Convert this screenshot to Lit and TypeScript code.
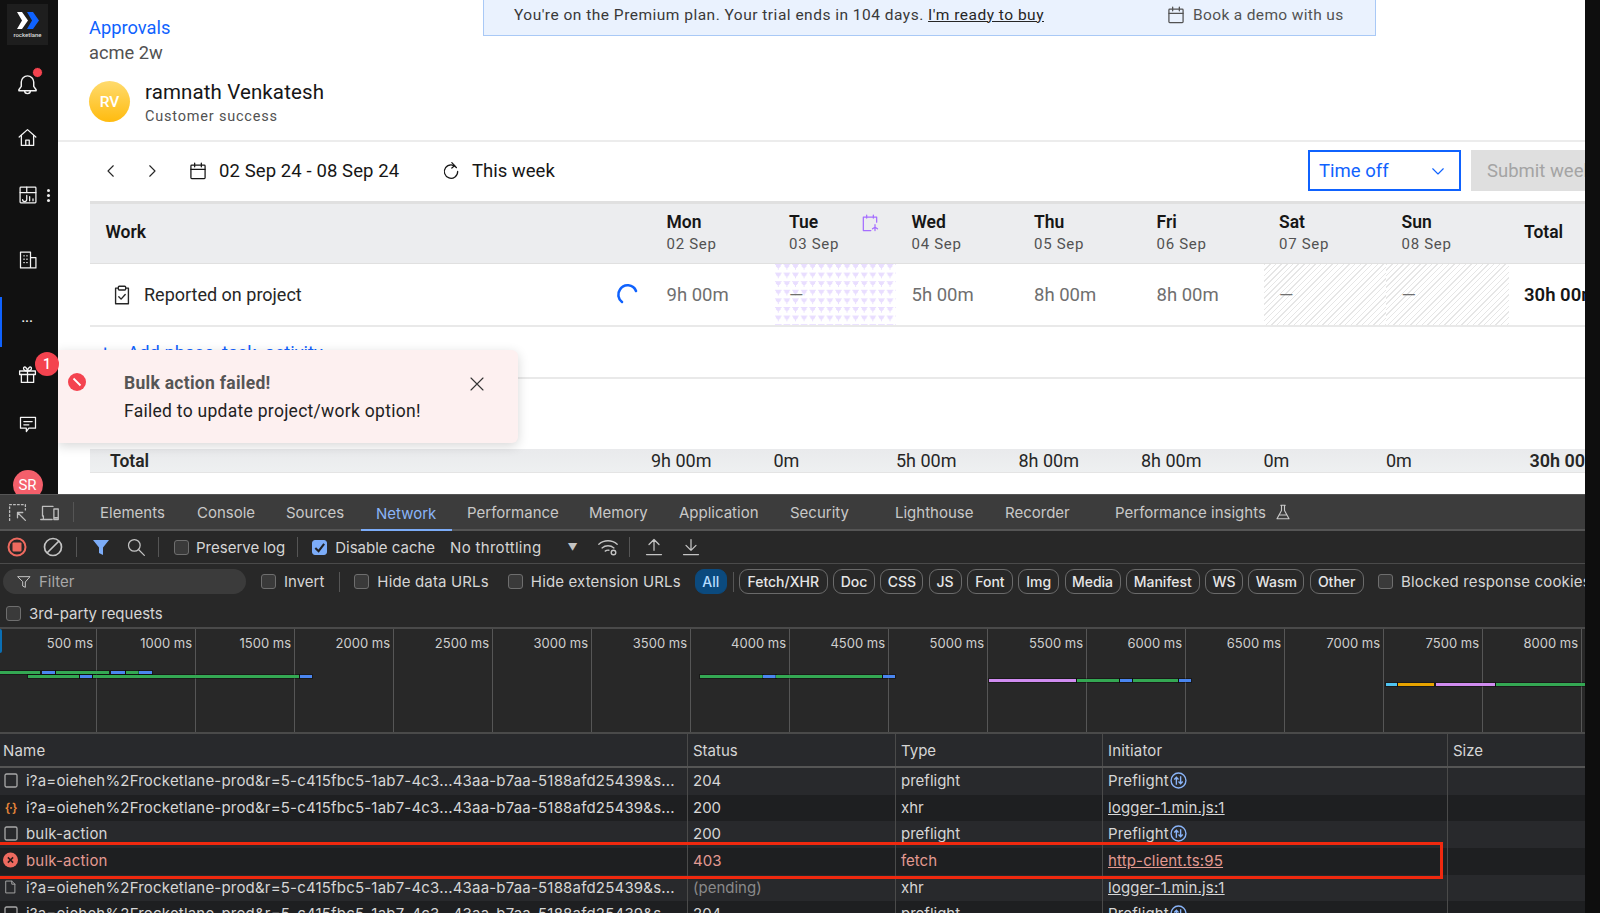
import { LitElement, html, css, svg } from "lit";
import { customElement } from "lit/decorators.js";

// ========== Iconos ============= //
const icon = (size: number, body: unknown, box = 24) => html`
  <svg width=${size} height=${size} viewBox="0 0 ${box} ${box}" fill="none" stroke="currentColor" stroke-width="1.5" stroke-linecap="round" stroke-linejoin="round">${body}</svg>
`;

const calendarPath = svg`<rect x="3.5" y="5" width="17" height="16" rx="1"/><path d="M3.5 10h17M8 2.5V7M16 2.5V7"/>`;
const bellPath = svg`<path d="M12 3a6.5 6.5 0 0 0-6.5 6.5V14L3 17.5v1h18v-1L18.5 14V9.5A6.5 6.5 0 0 0 12 3z"/><path d="M9 18.5a3 3 0 0 0 6 0"/>`;
const homePath = svg`<path d="M2.5 11.5 12 3l9.5 8.5"/><path d="M5 9.5V21h14V9.5"/><path d="M10 21v-6h4v6"/>`;
const reportPath = svg`<rect x="2.5" y="2.5" width="19" height="19" rx="1"/><path d="M2.5 9h19M10.5 2.5V9"/><path d="M5.5 17.5a2.5 2.5 0 0 0 5 0V12.5"/><path d="M14 14v5M18 16.5v2.5"/>`;
const buildingPath = svg`<path d="M3 21.5V2.5h12v19M15 9h6.5v12.5H3"/><path d="M7 7h.5M10.5 7h.5M7 11h.5M10.5 11h.5M7 15h.5M10.5 15h.5"/>`;
const giftPath = svg`<rect x="3" y="8" width="18" height="4"/><path d="M5 12v9h14v-9M12 8v13"/><path d="M12 8C9 8 7 6.5 7.5 4.5S11 3 12 8c1-5 4-5.5 4.5-3.5S15 8 12 8z"/>`;
const commentPath = svg`<path d="M3 4h18v13h-8l-3 4v-4H3z"/><path d="M7 9h10M7 13h6"/>`;
const funnelPath = svg`<path d="M3 4h18l-7 8v8l-4-2v-6z"/>`;

// ========== Vista de horas ============= //
@customElement("timesheet-view")
export class TimesheetView extends LitElement {
  static styles = css`
    :host {
      display: block;
      position: relative;
      height: 494px;
      overflow: hidden;
      background: #fff;
      font-family: Roboto, "Liberation Sans", sans-serif;
      color: #161616;
    }

    .banner {
      position: absolute;
      left: 425px;
      top: -1px;
      width: 893px;
      height: 37px;
      box-sizing: border-box;
      padding-bottom: 6px;
      background: #eaf2fe;
      border: 1px solid #a9c9f6;
      display: flex;
      align-items: center;
      font-size: 15.5px;
      letter-spacing: 0.49px;
      color: #393939;
      z-index: 1;
    }
    .banner .msg { margin-left: 30px; width: 652px; white-space: nowrap; }
    .banner u { color: #262626; }
    .banner .demo { display: flex; align-items: center; gap: 7px; color: #525252; letter-spacing: 0.35px; }

    .head { height: 140px; padding-left: 31px; box-sizing: border-box; }
    .approvals { padding-top: 17px; height: 22px; line-height: 22px; font-size: 18.3px; color: #0f62fe; }
    .project { margin-top: 3px; height: 22px; line-height: 22px; font-size: 18.3px; color: #525252; }
    .person { display: flex; gap: 15px; margin-top: 17px; }
    .avatar {
      width: 41px;
      height: 41px;
      border-radius: 50%;
      background: linear-gradient(#ffdb6e, #ffbb0f);
      color: #fff;
      font-size: 15.5px;
      font-weight: 500;
      display: flex;
      align-items: center;
      justify-content: center;
    }
    .name { font-size: 20.5px; line-height: 24px; margin-top: -1px; letter-spacing: 0.12px; }
    .role { font-size: 14.5px; line-height: 18px; margin-top: 4px; color: #525252; letter-spacing: 0.8px; }

    .tools {
      height: 61px;
      border-top: 2px solid #ececec;
      box-sizing: border-box;
      display: flex;
      align-items: center;
      font-size: 18.5px;
      padding-bottom: 2px;
      white-space: nowrap;
    }
    .nav { display: flex; color: #262626; margin-left: 44px; gap: 23px; }
    .range { display: flex; align-items: center; gap: 11px; margin-left: 27px; width: 253px; letter-spacing: 0.1px; }
    .today { display: flex; align-items: center; gap: 11px; }
    .spacer { flex: 1; }
    .time-off {
      width: 153px;
      height: 41px;
      box-sizing: border-box;
      border: 2px solid #0f62fe;
      color: #0f62fe;
      display: flex;
      align-items: center;
      justify-content: space-between;
      padding: 0 12px 0 9px;
    }
    .submit {
      width: 114px;
      height: 41px;
      margin-left: 10px;
      background: #dfdfdf;
      color: #a4a4a4;
      display: flex;
      align-items: center;
      padding-left: 16px;
      box-sizing: border-box;
      overflow: hidden;
    }

    .sheet { margin-left: 32px; }
    .row {
      display: grid;
      grid-template-columns: 561px repeat(7, 122.5px) 150px;
      align-items: stretch;
    }
    .row > div { display: flex; align-items: center; padding-left: 15.5px; white-space: nowrap; min-width: 0; }

    .header { height: 63px; background: #ecedef; border-top: 3px solid #e0e0e0; border-bottom: 1px solid #e0e0e0; box-sizing: border-box; }
    .header > div { padding-bottom: 3px; }
    .header .cap { font-weight: 600; font-size: 17.5px; }
    .header .day { flex-direction: column; align-items: flex-start; justify-content: center; position: relative; }
    .header .date { font-size: 15px; letter-spacing: 0.7px; color: #525252; margin-top: 3px; }
    .leave { position: absolute; right: 16px; top: 9px; color: #a56eff; }

    .task { height: 63px; border-bottom: 2px solid #e9e9e9; box-sizing: border-box; font-size: 18.5px; color: #6f6f6f; }
    .task > div { padding-top: 1px; }
    .task .work { color: #262626; gap: 11px; padding: 0 11px 0 21px; font-size: 18px; }
    .spin { margin-left: auto; color: #0f62fe; display: flex; }
    .task .sum { color: #161616; font-weight: 600; }
    .holiday {
      background-image: conic-gradient(from -36deg at 50% 62%, #e9deff 72deg, transparent 0);
      background-size: 8.6px 8.6px;
    }
    .weekend {
      background-image: repeating-linear-gradient(135deg, #e6e6e6 0 1px, transparent 1px 4px);
    }

    .add { height: 52px; border-bottom: 2px solid #e9e9e9; box-sizing: border-box; display: flex; align-items: center; color: #0f62fe; font-size: 18.3px; gap: 17px; padding-left: 10px; }

    .total {
      margin-top: 70px;
      height: 24px;
      background: linear-gradient(#e9eaec, #eef0f1);
      border-bottom: 1px solid #e4e4e4;
      box-sizing: border-box;
      font-size: 18px;
      color: #262626;
    }
    .total > div { padding-left: 0; }
    .total .cap { padding-left: 20px; font-weight: 600; font-size: 17.5px; }
    .total .sum { font-weight: 600; padding-left: 21px; }

    .toast {
      position: absolute;
      left: 0;
      top: 350px;
      width: 460px;
      height: 93px;
      box-sizing: border-box;
      padding: 22px 32px 0 10px;
      display: flex;
      align-items: flex-start;
      background: #fdf0f0;
      border-radius: 0 6px 6px 0;
      box-shadow: 0 3px 12px rgba(0, 0, 0, 0.16);
      z-index: 2;
      font-size: 17.5px;
      letter-spacing: 0.28px;
      white-space: nowrap;
    }
    .toast .bad { margin: 1px 38px 0 0; flex: none; }
    .toast .copy { flex: 1; }
    .toast .title { line-height: 22px; font-weight: 700; color: #555; }
    .toast .text { margin-top: 6px; line-height: 22px; color: #222; }
    .toast .close { margin-top: 3px; color: #333; display: flex; }
  `;

  private days = [
    ["Mon", "02 Sep"], ["Tue", "03 Sep"], ["Wed", "04 Sep"], ["Thu", "05 Sep"],
    ["Fri", "06 Sep"], ["Sat", "07 Sep"], ["Sun", "08 Sep"],
  ];

  render() {
    return html`
      <div class="banner">
        <span class="msg">You're on the Premium plan. Your trial ends in 104 days. <u>I'm ready to buy</u></span>
        <span class="demo">${icon(20, calendarPath)} Book a demo with us</span>
      </div>

      <div class="head">
        <div class="approvals">Approvals</div>
        <div class="project">acme 2w</div>
        <div class="person">
          <div class="avatar">RV</div>
          <div>
            <div class="name">ramnath Venkatesh</div>
            <div class="role">Customer success</div>
          </div>
        </div>
      </div>

      <div class="tools">
        <div class="nav">
          ${icon(18, svg`<path d="M15 5l-7 7 7 7"/>`)}
          ${icon(18, svg`<path d="M9 5l7 7-7 7"/>`)}
        </div>
        <div class="range">${icon(20, calendarPath)} 02 Sep 24 - 08 Sep 24</div>
        <div class="today">
          ${icon(20, svg`<path d="M18.5 8A8 8 0 1 0 20 12.5"/><path d="M13 2l3.5 3.5L13 8.5"/>`)} This week
        </div>
        <div class="spacer"></div>
        <div class="time-off">Time off ${icon(18, svg`<path d="M5 9l7 7 7-7"/>`)}</div>
        <div class="submit">Submit week</div>
      </div>

      <div class="sheet">
        <div class="row header">
          <div class="cap">Work</div>
          ${this.days.map(([d, date], i) => html`
            <div class="day">
              <span class="cap">${d}</span>
              <span class="date">${date}</span>
              ${i === 1 ? html`<span class="leave">${icon(20, svg`<path d="M20 11V5H4v16h9"/><path d="M8 2.5V6M16 2.5V6"/><path d="M18 14v7M15 19l3-2 3 2"/>`)}</span>` : ""}
            </div>
          `)}
          <div class="cap">Total</div>
        </div>

        <div class="row task">
          <div class="work">
            ${icon(22, svg`<path d="M8 4.5H5v17h14v-17h-3"/><rect x="8" y="2.5" width="8" height="4" rx="1"/><path d="M8.5 14l2.5 2.5 4.5-5"/>`)}
            Reported on project
            <span class="spin">
              <svg width="24" height="24" viewBox="0 0 24 24" fill="none" stroke="currentColor" stroke-width="2.6" stroke-linecap="round"><path d="M20 8A9 9 0 0 0 4 6.5 9 9 0 0 0 6 19"/></svg>
            </span>
          </div>
          <div>9h 00m</div>
          <div class="holiday">—</div>
          <div>5h 00m</div>
          <div>8h 00m</div>
          <div>8h 00m</div>
          <div class="weekend">—</div>
          <div class="weekend">—</div>
          <div class="sum">30h 00m</div>
        </div>

        <div class="add"><span>+</span><span>Add phase, task, activity</span></div>

        <div class="row total">
          <div class="cap">Total</div>
          <div>9h 00m</div>
          <div>0m</div>
          <div>5h 00m</div>
          <div>8h 00m</div>
          <div>8h 00m</div>
          <div>0m</div>
          <div>0m</div>
          <div class="sum">30h 00m</div>
        </div>
      </div>

      <div class="toast">
        <svg class="bad" width="18" height="18" viewBox="0 0 18 18"><circle cx="9" cy="9" r="9" fill="#f4434f"/><path d="M5.5 5.5l7 7" stroke="#fff" stroke-width="1.8"/></svg>
        <div class="copy">
          <div class="title">Bulk action failed!</div>
          <div class="text">Failed to update project/work option!</div>
        </div>
        <span class="close">${icon(18, svg`<path d="M4 4l16 16M20 4L4 20"/>`)}</span>
      </div>
    `;
  }
}

// ========== Panel de DevTools ============= //
type Req = { icon: string; name: string; status: string; type: string; init: string; link?: boolean; pre?: boolean; err?: boolean; pending?: boolean };

const longName = "i?a=oieheh%2Frocketlane-prod&r=5-c415fbc5-1ab7-4c3...43aa-b7aa-5188afd25439&s...";

@customElement("devtools-panel")
export class DevtoolsPanel extends LitElement {
  static styles = css`
    :host {
      display: block;
      height: 419px;
      overflow: hidden;
      background: #282828;
      color: #d6d6d6;
      font-family: Inter, Roboto, sans-serif;
      font-size: 15px;
      white-space: nowrap;
    }

    .tabs {
      height: 34px;
      background: #3c3c3c;
      border-top: 1px solid #555;
      border-bottom: 2px solid #555;
      display: grid;
      grid-template-columns: 85px 97px 89px 90px 91px 122px 90px 111px 105px 110px 110px 1fr;
      align-items: stretch;
      color: #c8c8c8;
    }
    .tabs .lead { display: flex; align-items: center; gap: 11px; padding-left: 7px; color: #bdbdbd; }
    .tabs .lead .sep { margin-left: 2px; }
    .tabs .tab { display: flex; align-items: center; gap: 8px; padding-left: 15px; }
    .tabs .on { color: #8ab4f8; box-shadow: inset 0 -2px 0 #7cacf8; margin-bottom: -2px; }

    .bar { display: flex; align-items: center; box-sizing: border-box; border-bottom: 1px solid #4a4a4a; }
    .bar2 { height: 33px; }
    .bar3 { height: 34px; border-bottom: 0; padding-top: 1px; overflow: hidden; }
    .bar4 { height: 31px; border-bottom: 2px solid #4a4a4a; padding: 1px 0 0 6px; }

    .box { width: 15px; height: 15px; border: 1px solid #6e6e6e; border-radius: 3px; background: #3a3a3a; box-sizing: border-box; flex: none; margin-right: 8px; }
    .box.yes { background: #7cacf8; border-color: #7cacf8; color: #202124; display: flex; align-items: center; justify-content: center; }
    .sep { width: 1px; height: 20px; background: #555; flex: none; }
    .ico { display: flex; flex: none; color: #c4c4c4; }

    /* Barra de grabacion */
    .rec { margin-left: 7px; color: #ee6a5f; }
    .clear { margin-left: 16px; }
    .sep-a { margin-left: 13px; }
    .filter-on { margin-left: 15px; color: #7cacf8; }
    .find { margin-left: 16px; }
    .sep-b { margin-left: 12px; }
    .box.preserve { margin: 0 7px 0 15px; }
    .sep-c { margin-left: 12px; }
    .cache { margin-left: 14px; }
    .throttle { margin-left: 15px; letter-spacing: 0.3px; }
    .arrow { margin-left: 26px; font-size: 10px; color: #c4c4c4; }
    .wifi { margin-left: 19px; }
    .sep-d { margin-left: 10px; }
    .upload { margin-left: 14px; }
    .download { margin-left: 17px; }

    /* Barra de filtros */
    .pill {
      width: 243px;
      height: 25px;
      margin-left: 3px;
      background: #3b3b3b;
      border-radius: 13px;
      display: flex;
      align-items: center;
      gap: 7px;
      padding-left: 13px;
      box-sizing: border-box;
      color: #a8a8a8;
      flex: none;
    }
    .invert { margin-left: 15px; }
    .sep-e { margin-left: 15px; }
    .hide-data { margin-left: 14px; }
    .hide-ext { margin-left: 19px; }
    .wide { letter-spacing: 0.15px; flex: none; }
    .sep-f { margin: 0 5px 0 6px; }
    .blocked { margin-left: 9px; }
    .chip {
      height: 25px;
      box-sizing: border-box;
      border: 1px solid #6a6a6a;
      border-radius: 9px;
      display: flex;
      align-items: center;
      justify-content: center;
      font-size: 14px;
      font-weight: 500;
      color: #e6e6e6;
      flex: none;
      margin-right: 5.3px;
    }
    .chip.all { width: 32px; margin: 0 0 0 14px; background: #0b4a7e; border-color: #0b4a7e; color: #b6dcff; }

    .overview { position: relative; height: 105px; border-bottom: 2px solid #4a4a4a; box-sizing: border-box; display: flex; font-size: 13px; color: #cfcfcf; }
    .tick { width: 99px; flex: none; border-right: 1px solid #565656; box-sizing: border-box; text-align: right; padding: 6px 3px 0 0; }
    .tick:first-child { width: 97px; }
    .seg { position: absolute; height: 3px; box-shadow: 0 0 0 1px rgba(0, 0, 0, 0.35); }
    .handle { position: absolute; left: 0; top: 0; width: 2px; height: 24px; background: #0a6fb5; border-radius: 0 2px 2px 0; }

    .net { position: relative; }
    .tr { display: grid; grid-template-columns: 687px 208px 207px 345px 1fr; height: 26.7px; align-items: stretch; background: #28292c; }
    .tr.alt { background: #1e1f21; }
    .tr > div { display: flex; align-items: center; padding: 0 0 2px 5px; border-left: 1px solid #4a4a4a; overflow: hidden; box-sizing: border-box; }
    .tr > div:first-child { border-left: 0; padding-left: 3px; gap: 8px; letter-spacing: 0.19px; }
    .tr > div:nth-child(4) { letter-spacing: 0.15px; }
    .tr.th { height: 34px; border-bottom: 2px solid #555; box-sizing: border-box; }
    .tr.th > div { padding-bottom: 0; }
    .tr.err { color: #e39a92; }
    .tr .pending { color: #8a8a8a; }
    .link { text-decoration: underline; }
    .pre { color: #8ab4f8; margin-left: 1px; display: flex; }
    .kind { width: 15px; display: flex; justify-content: center; flex: none; color: #a8a8a8; }
    .kind.json { color: #e8873a; font-size: 12px; font-weight: 600; letter-spacing: -1px; }

    .mark {
      position: absolute;
      left: -3px;
      top: 108px;
      width: 1446px;
      height: 37px;
      border: 3px solid #f0290f;
      box-sizing: border-box;
    }
  `;

  private ticks = [500, 1000, 1500, 2000, 2500, 3000, 3500, 4000, 4500, 5000, 5500, 6000, 6500, 7000, 7500, 8000];

  // x inicial, x final, fila y color de cada tramo del resumen
  private segs: [number, number, number, string][] = [
    [0, 40, 0, "g"], [42, 55, 0, "b"], [56, 109, 0, "g"], [111, 125, 0, "b"], [126, 139, 0, "g"], [139, 152, 0, "b"],
    [28, 79, 1, "g"], [80, 92, 1, "b"], [93, 299, 1, "g"], [300, 312, 1, "b"],
    [700, 763, 1, "g"], [763, 776, 1, "b"], [776, 882, 1, "g"], [883, 895, 1, "b"],
    [989, 1076, 2, "p"], [1077, 1119, 2, "g"], [1120, 1132, 2, "b"], [1133, 1178, 2, "g"], [1179, 1191, 2, "b"],
    [1386, 1397, 3, "c"], [1398, 1434, 3, "o"], [1436, 1495, 3, "p"], [1496, 1585, 3, "g"],
  ];

  private colors: Record<string, string> = { g: "#34a853", b: "#4a86f0", p: "#d08cf0", c: "#4fc3f0", o: "#e8a400" };

  private chips: [string, number][] = [
    ["Fetch/XHR", 89], ["Doc", 42], ["CSS", 43], ["JS", 33], ["Font", 46], ["Img", 41],
    ["Media", 56], ["Manifest", 74], ["WS", 38], ["Wasm", 56], ["Other", 54],
  ];

  private rows: Req[] = [
    { icon: "box", name: longName, status: "204", type: "preflight", init: "Preflight", pre: true },
    { icon: "json", name: longName, status: "200", type: "xhr", init: "logger-1.min.js:1", link: true },
    { icon: "box", name: "bulk-action", status: "200", type: "preflight", init: "Preflight", pre: true },
    { icon: "err", name: "bulk-action", status: "403", type: "fetch", init: "http-client.ts:95", link: true, err: true },
    { icon: "doc", name: longName, status: "(pending)", type: "xhr", init: "logger-1.min.js:1", link: true, pending: true },
    { icon: "box", name: longName, status: "204", type: "preflight", init: "Preflight", pre: true },
  ];

  private kind(k: string) {
    if (k === "json") return html`<span class="kind json">{·}</span>`;
    if (k === "err") return html`<span class="kind"><svg width="16" height="16" viewBox="0 0 16 16"><circle cx="8" cy="8" r="8" fill="#ee6a5f"/><path d="M5.2 5.2l5.6 5.6M10.8 5.2l-5.6 5.6" stroke="#2a1a1a" stroke-width="1.6"/></svg></span>`;
    if (k === "doc") return html`<span class="kind">${icon(16, svg`<path d="M5 2.5h9l5 5v14H5zM14 2.5v5h5"/>`)}</span>`;
    return html`<span class="kind"><svg width="14" height="15" viewBox="0 0 14 15" fill="none" stroke="currentColor" stroke-width="1.3"><rect x="1" y="1" width="12" height="13" rx="1.5"/></svg></span>`;
  }

  render() {
    return html`
      <div class="tabs">
        <div class="lead">
          ${icon(21, svg`<path stroke-dasharray="2 2.5" d="M3 21V3h18v6"/><path d="M12 12l9 9M12 18v-6h6"/>`)}
          ${icon(21, svg`<path d="M4 16V5h12M2 20h13M5 20v-4M17 8h5v12h-5zM18 18h3"/>`)}
          <span class="sep"></span>
        </div>
        ${["Elements", "Console", "Sources", "Network", "Performance", "Memory", "Application", "Security", "Lighthouse", "Recorder"].map(t => html`
          <div class="tab ${t === "Network" ? "on" : ""}">${t}</div>
        `)}
        <div class="tab">Performance insights ${icon(18, svg`<path d="M9 3h6M10 3v7l-6 11h16l-6-11V3M7 16h10"/>`)}</div>
      </div>

      <div class="bar bar2">
        <span class="ico rec">
          <svg width="20" height="20" viewBox="0 0 20 20" fill="none" stroke="currentColor" stroke-width="2"><circle cx="10" cy="10" r="8.5"/><rect x="5.5" y="5.5" width="9" height="9" rx="1" fill="currentColor" stroke="none"/></svg>
        </span>
        <span class="ico clear"><svg width="20" height="20" viewBox="0 0 20 20" fill="none" stroke="currentColor" stroke-width="1.7"><circle cx="10" cy="10" r="8.5"/><path d="M4 16L16 4"/></svg></span>
        <span class="sep sep-a"></span>
        <span class="ico filter-on"><svg width="18" height="18" viewBox="0 0 18 18" fill="currentColor"><path d="M1 2h16l-6 7.5V17l-4-2V9.5z"/></svg></span>
        <span class="ico find">${icon(20, svg`<circle cx="10" cy="10" r="7"/><path d="M15 15l7 7"/>`)}</span>
        <span class="sep sep-b"></span>
        <span class="box preserve"></span>Preserve log
        <span class="sep sep-c"></span>
        <span class="box yes cache"><svg width="13" height="13" viewBox="0 0 14 14" fill="none" stroke="currentColor" stroke-width="2.2"><path d="M2.5 7.5L6 11l6-8"/></svg></span>Disable cache
        <span class="throttle">No throttling</span>
        <span class="arrow">▼</span>
        <span class="ico wifi">${icon(22, svg`<path d="M2 9a15 15 0 0 1 20 0M5.5 13a10 10 0 0 1 13 0M9 16.5a5 5 0 0 1 4-1"/><circle cx="18" cy="18" r="2.5"/>`)}</span>
        <span class="sep sep-d"></span>
        <span class="ico upload">${icon(20, svg`<path d="M12 16V3M6 9l6-6 6 6M3 21h18"/>`)}</span>
        <span class="ico download">${icon(20, svg`<path d="M12 3v13M6 10l6 6 6-6M3 21h18"/>`)}</span>
      </div>

      <div class="bar bar3">
        <div class="pill"><span class="ico">${icon(16, funnelPath)}</span>Filter</div>
        <span class="box invert"></span>Invert
        <span class="sep sep-e"></span>
        <span class="box hide-data"></span><span class="wide">Hide data URLs</span>
        <span class="box hide-ext"></span><span class="wide">Hide extension URLs</span>
        <span class="chip all">All</span>
        <span class="sep sep-f"></span>
        ${this.chips.map(([c, w]) => html`<span class="chip" style="width:${w}px">${c}</span>`)}
        <span class="box blocked"></span><span class="wide">Blocked response cookies</span>
      </div>

      <div class="bar bar4"><span class="box"></span>3rd-party requests</div>

      <div class="overview">
        ${this.ticks.map(t => html`<div class="tick">${t} ms</div>`)}
        <span class="handle"></span>
        ${this.segs.map(([a, b, r, c]) => html`
          <span class="seg" style="left:${a}px;width:${b - a}px;top:${41.5 + r * 4}px;background:${this.colors[c]}"></span>
        `)}
      </div>

      <div class="net">
        <div class="tr th">
          <div>Name</div><div>Status</div><div>Type</div><div>Initiator</div><div>Size</div>
        </div>
        ${this.rows.map((r, i) => html`
          <div class="tr ${i % 2 ? "alt" : ""} ${r.err ? "err" : ""}">
            <div>${this.kind(r.icon)}<span>${r.name}</span></div>
            <div class=${r.pending ? "pending" : ""}>${r.status}</div>
            <div>${r.type}</div>
            <div>
              <span class=${r.link ? "link" : ""}>${r.init}</span>
              ${r.pre ? html`<span class="pre"><svg width="17" height="17" viewBox="0 0 16 16" fill="none" stroke="currentColor" stroke-width="1.3"><circle cx="8" cy="8" r="7"/><path d="M6 12V5M4 7l2-2 2 2M10 4v7M8 9l2 2 2-2"/></svg></span>` : ""}
            </div>
            <div></div>
          </div>
        `)}
        <div class="mark"></div>
      </div>
    `;
  }
}

// ========== Pagina ============= //
@customElement("app-root")
export class AppRoot extends LitElement {
  static styles = css`
    :host {
      display: flex;
      width: 1600px;
      height: 913px;
      overflow: hidden;
      background: #0e0e0e;
    }

    .window { width: 1585px; flex: none; }
    .top { display: flex; height: 494px; }
    .top timesheet-view { flex: 1; min-width: 0; }

    .side {
      width: 58px;
      flex: none;
      height: 494px;
      box-sizing: border-box;
      padding-right: 3px;
      background: #111;
      color: #f4f4f4;
      display: grid;
      grid-template-columns: 55px;
      grid-template-rows: 60px 48px 58px 58px 72px 50px 56px 44px 48px;
      justify-items: center;
      align-items: center;
      position: relative;
      z-index: 5;
      font-family: Roboto, sans-serif;
    }
    .logo {
      align-self: start;
      margin-top: 4px;
      width: 41px;
      height: 41px;
      background: #1e1e1e;
      display: flex;
      flex-direction: column;
      align-items: center;
      padding-top: 8px;
      box-sizing: border-box;
    }
    .logo span { font-size: 6px; line-height: 7px; font-weight: 500; color: #ddd; margin-top: 2px; }
    .item { position: relative; display: flex; }
    .dot { position: absolute; left: 16px; top: -6px; width: 11px; height: 11px; border-radius: 50%; background: #f4434f; border: 1px solid #111; box-sizing: border-box; }
    .kebab { position: absolute; left: 29px; top: 4px; width: 3px; height: 3px; border-radius: 50%; background: #eee; box-shadow: 0 5px 0 #eee, 0 10px 0 #eee; }
    .active { position: absolute; left: 0; top: 297px; width: 2px; height: 50px; background: #0f62fe; }
    .dots { font-size: 8px; letter-spacing: 1px; font-weight: 700; line-height: 10px; margin-top: 2px; }
    .count {
      position: absolute;
      left: 18px;
      top: -12px;
      width: 24px;
      height: 24px;
      border-radius: 50%;
      background: #f4434f;
      color: #fff;
      font-size: 14px;
      font-weight: 500;
      display: flex;
      align-items: center;
      justify-content: center;
    }
    .clip { height: 48px; width: 55px; overflow: hidden; justify-content: center; }
    .me {
      width: 30px;
      height: 30px;
      border-radius: 50%;
      background: #f45f6b;
      color: #fff;
      font-size: 15px;
      display: flex;
      align-items: center;
      justify-content: center;
      margin-top: 24px;
      flex: none;
    }
  `;

  render() {
    return html`
      <div class="window">
        <div class="top">
          <div class="side">
            <div class="logo">
              <svg width="22" height="17" viewBox="0 0 22 17"><path d="M0 0h5l6 8.5-6 8.5H0l5-8.5z" fill="#fff"/><path d="M10 0h6l6 8.5-6 8.5h-6l5-8.5z" fill="#0f62fe"/></svg>
              <span>rocketlane</span>
            </div>
            <div class="item">${icon(23, bellPath)}<span class="dot"></span></div>
            <div class="item">${icon(21, homePath)}</div>
            <div class="item">${icon(20, reportPath)}<span class="kebab"></span></div>
            <div class="item">${icon(20, buildingPath)}</div>
            <div class="item dots">•••</div>
            <div class="item">${icon(21, giftPath)}<span class="count">1</span></div>
            <div class="item">${icon(20, commentPath)}</div>
            <div class="item clip"><div class="me">SR</div></div>
            <span class="active"></span>
          </div>
          <timesheet-view></timesheet-view>
        </div>
        <devtools-panel></devtools-panel>
      </div>
    `;
  }
}
